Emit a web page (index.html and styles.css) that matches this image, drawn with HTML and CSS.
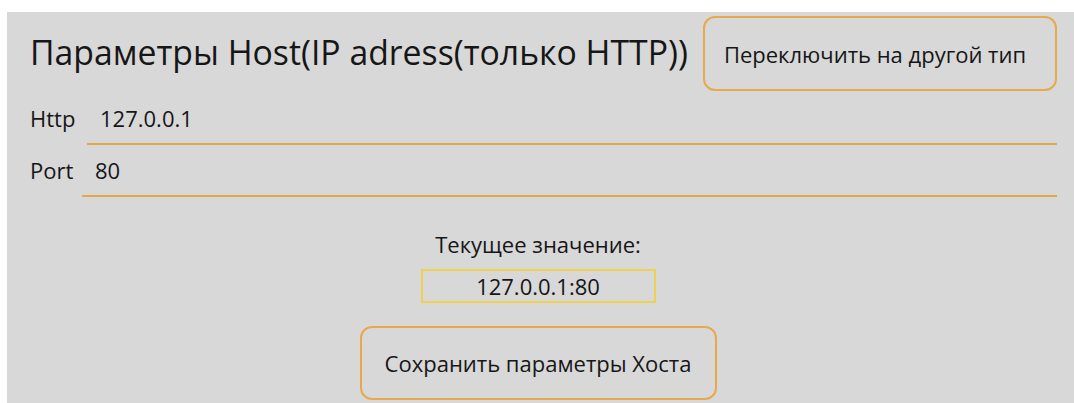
FILE: index.html
```html
<!DOCTYPE html>
<html lang="ru">
<head>
<meta charset="utf-8">
<title>Параметры Host</title>
<link rel="stylesheet" href="styles.css">
</head>
<body>
<div class="panel">
  <div class="header">
    <h1 class="title">Параметры Host(IP adress(только HTTP))</h1>
    <button class="btn btn-switch" type="button">Переключить на другой тип</button>
  </div>
  <div class="field field-http">
    <label class="field-label" for="http">Http</label>
    <input class="field-input" id="http" type="text" value="127.0.0.1">
  </div>
  <div class="field field-port">
    <label class="field-label" for="port">Port</label>
    <input class="field-input" id="port" type="text" value="80">
  </div>
  <div class="current">
    <div class="current-label">Текущее значение:</div>
    <div class="current-value">127.0.0.1:80</div>
    <button class="btn btn-save" type="button">Сохранить параметры Хоста</button>
  </div>
</div>
</body>
</html>
```

FILE: styles.css
```css
html, body {
  margin: 0;
  padding: 0;
  background: #ffffff;
}

body {
  font-family: "Open Sans", "Noto Sans", sans-serif;
  font-size: 22px;
  color: #161616;
}

.panel {
  margin: 12px 0 0 7px;
  height: 391px;
  background: #d8d8d8;
  box-sizing: border-box;
  padding: 4px 17px 0 23px;
  display: flex;
  flex-direction: column;
}

.header {
  display: flex;
  align-items: center;
  justify-content: space-between;
}

.title {
  margin: 0 0 3px;
  font-size: 33.75px;
  font-weight: 400;
  white-space: nowrap;
}

.btn {
  font-family: inherit;
  font-size: 22px;
  color: inherit;
  background: transparent;
  border: 2px solid #e8a94c;
  border-radius: 12px;
  box-sizing: border-box;
  padding: 0;
  cursor: pointer;
}

.btn-switch {
  width: 354px;
  height: 75px;
  padding-right: 10px;
}

.field {
  display: flex;
  align-items: baseline;
}

.field-http {
  margin-top: 12px;
}

.field-port {
  margin-top: 10px;
}

.field-label {
  flex: none;
  line-height: 30px;
}

.field-http .field-label { width: 57px; }
.field-port .field-label { width: 52px; }

.field-input {
  flex: 1;
  min-width: 0;
  font-family: inherit;
  font-size: 22px;
  line-height: 30px;
  height: 30px;
  box-sizing: content-box;
  color: inherit;
  background: transparent;
  border: none;
  border-bottom: 2px solid #e3a54e;
  padding: 0 0 10px 13px;
  outline: none;
}

.current {
  display: flex;
  flex-direction: column;
  align-items: center;
  margin: 32px 11px 0 0;
}

.current-label {
  line-height: 30px;
}

.current-value {
  margin-top: 10px;
  width: 235px;
  height: 34px;
  box-sizing: border-box;
  border: 2px solid #f0d050;
  line-height: 30px;
  text-align: center;
}

.btn-save {
  margin-top: 23px;
  width: 357px;
  height: 74px;
}
```
